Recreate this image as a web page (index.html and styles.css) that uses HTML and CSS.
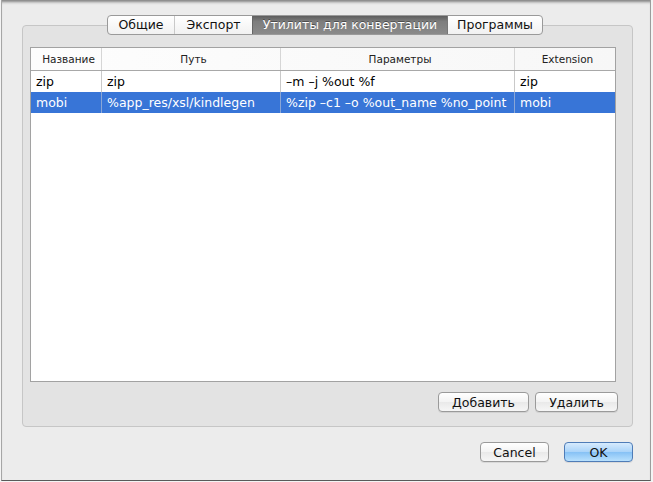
FILE: index.html
```html
<!DOCTYPE html>
<html>
<head>
<meta charset="utf-8">
<link rel="stylesheet" href="styles.css">
</head>
<body>
<div class="screen">
  <div class="window">
    <div class="tabs">
      <div class="tab first">Общие</div>
      <div class="tab">Экспорт</div>
      <div class="tab selected">Утилиты для конвертации</div>
      <div class="tab last">Программы</div>
    </div>
    <div class="group">
      <div class="table">
        <div class="row head">
          <div class="cell c1">Название</div>
          <div class="cell c2">Путь</div>
          <div class="cell c3">Параметры</div>
          <div class="cell c4">Extension</div>
        </div>
        <div class="row">
          <div class="cell c1">zip</div>
          <div class="cell c2">zip</div>
          <div class="cell c3">–m –j %out %f</div>
          <div class="cell c4">zip</div>
        </div>
        <div class="row sel">
          <div class="cell c1">mobi</div>
          <div class="cell c2">%app_res/xsl/kindlegen</div>
          <div class="cell c3">%zip –c1 –o %out_name %no_point</div>
          <div class="cell c4">mobi</div>
        </div>
      </div>
      <div class="group-buttons">
        <button class="btn add">Добавить</button>
        <button class="btn del">Удалить</button>
      </div>
    </div>
    <div class="footer">
      <button class="btn cancel">Cancel</button>
      <button class="btn ok">OK</button>
    </div>
  </div>
</div>
</body>
</html>
```

FILE: styles.css
```css
* { box-sizing: border-box; }
html, body { margin: 0; padding: 0; }
body {
  font-family: "DejaVu Sans", "Liberation Sans", sans-serif;
  background: #f2f2f2;
}
.screen {
  width: 653px;
  height: 482px;
  padding-left: 1px;
  background: #f4f4f4;
}
.window {
  width: 650px;
  height: 481px;
  background: #ececec;
  border-left: 1px solid #a6a6a6;
  border-right: 1px solid #9c9c9c;
  border-bottom: 1px solid #5a5a5a;
  box-shadow: inset 0 4px 3px -2px rgba(0,0,0,0.45);
  padding-top: 15px;
  padding-left: 20px;
}
.tabs {
  display: flex;
  margin-left: 85px;
  height: 20px;
  width: 436px;
  border: 1px solid #9a9a9a;
  border-radius: 4px;
  background: linear-gradient(#ffffff, #f1f1f1);
  margin-bottom: -10px;
  position: relative;
  z-index: 1;
  overflow: hidden;
}
.tab {
  font-size: 12.5px;
  line-height: 18px;
  color: #111;
  text-align: center;
  border-left: 1px solid #c9c9c9;
}
.tab.first { border-left: none; width: 66px; }
.tab:nth-child(2) { width: 78px; }
.tab.selected {
  width: 195px;
  color: #fff;
  border-left: 1px solid #666;
  background: linear-gradient(#5e5e5e, #7d7d7d 30%, #8a8a8a);
  text-shadow: 0 -1px 0 rgba(0,0,0,0.4);
}
.tab.last { flex: 1; border-left: 1px solid #777; }
.group {
  width: 611px;
  height: 402px;
  border: 1px solid #c6c6c6;
  border-radius: 4px;
  background: #e3e3e3;
  padding: 21px 0 0 7px;
}
.table {
  width: 586px;
  height: 335px;
  border: 1px solid #a2a2a2;
  background: #fff;
}
.row {
  display: flex;
  height: 21px;
  font-size: 12.5px;
  line-height: 21px;
  color: #000;
}
.row.head {
  height: 23px;
  border-bottom: 1px solid #a8a8a8;
  background: linear-gradient(90deg, #fdfdfd, #f7f7f7);
  font-size: 10.5px;
  line-height: 22px;
  color: #222;
}
.row.head .cell {
  text-align: center;
  border-right-color: #d6d6d6;
}
.cell {
  padding-left: 5px;
  white-space: nowrap;
  overflow: hidden;
  border-right: 1px solid #c9c9c9;
}
.c1 { width: 71px; }
.c2 { width: 179px; }
.c3 { width: 234px; }
.c4 { flex: 1; border-right: none; }
.row.head .c4 { border-right: none; }
.row.sel {
  background: #3875d7;
  color: #fff;
}
.row.sel .cell { border-right-color: #8aa6d6; }
.row.sel .c4 { border-right: none; }
.group-buttons {
  display: flex;
  justify-content: flex-end;
  gap: 6px;
  margin-top: 10px;
  padding-right: 14px;
}
.btn {
  font-family: "DejaVu Sans", "Liberation Sans", sans-serif;
  font-size: 12.5px;
  color: #111;
  height: 20px;
  padding: 0;
  border: 1px solid #9a9a9a;
  border-radius: 4px;
  background: linear-gradient(#ffffff, #f3f3f3 50%, #e9e9e9 51%, #f6f6f6);
  box-shadow: 0 1px 0 rgba(0,0,0,0.08);
}
.btn.add { width: 91px; }
.btn.del { width: 83px; }
.footer {
  display: flex;
  justify-content: flex-end;
  gap: 15px;
  margin-top: 15px;
  width: 611px;
}
.btn.cancel { width: 69px; }
.btn.ok {
  width: 69px;
  border-color: #4f7cb7;
  background: linear-gradient(#d7ebfd, #a9d3f9 50%, #86c1f5 51%, #b8e0fd);
}
```
